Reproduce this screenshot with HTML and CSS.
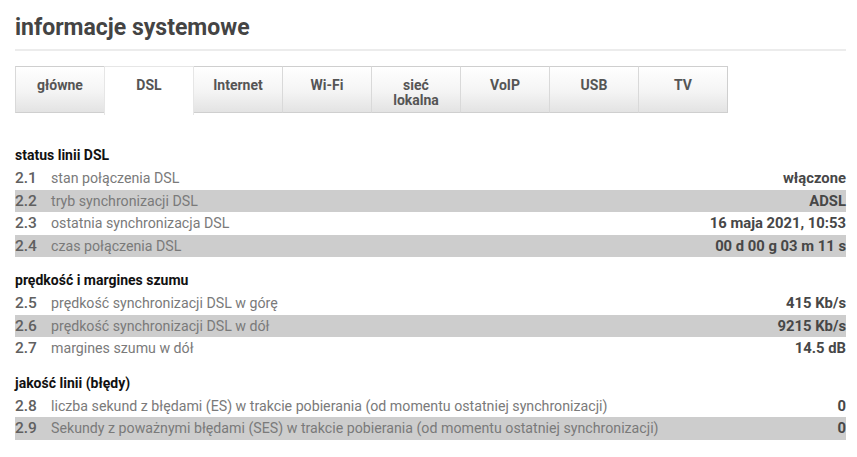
FILE: index.html
```html
<!DOCTYPE html>
<html lang="pl">
<head>
<meta charset="utf-8">
<link rel="stylesheet" href="styles.css">
</head>
<body>
<h1 class="title">informacje systemowe</h1>
<nav class="tabs">
  <div class="tab">główne</div>
  <div class="tab active">DSL</div>
  <div class="tab">Internet</div>
  <div class="tab">Wi-Fi</div>
  <div class="tab">sieć<br>lokalna</div>
  <div class="tab">VoIP</div>
  <div class="tab">USB</div>
  <div class="tab">TV</div>
</nav>

<section class="sect first">
  <h2 class="sect-title">status linii DSL</h2>
  <div class="row"><span class="num">2.1</span><span class="lbl">stan połączenia DSL</span><span class="val">włączone</span></div>
  <div class="row alt"><span class="num">2.2</span><span class="lbl">tryb synchronizacji DSL</span><span class="val">ADSL</span></div>
  <div class="row"><span class="num">2.3</span><span class="lbl">ostatnia synchronizacja DSL</span><span class="val">16 maja 2021, 10:53</span></div>
  <div class="row alt"><span class="num">2.4</span><span class="lbl">czas połączenia DSL</span><span class="val">00 d 00 g 03 m 11 s</span></div>
</section>

<section class="sect">
  <h2 class="sect-title">prędkość i margines szumu</h2>
  <div class="row"><span class="num">2.5</span><span class="lbl">prędkość synchronizacji DSL w górę</span><span class="val">415 Kb/s</span></div>
  <div class="row alt"><span class="num">2.6</span><span class="lbl">prędkość synchronizacji DSL w dół</span><span class="val">9215 Kb/s</span></div>
  <div class="row"><span class="num">2.7</span><span class="lbl">margines szumu w dół</span><span class="val">14.5 dB</span></div>
</section>

<section class="sect">
  <h2 class="sect-title">jakość linii (błędy)</h2>
  <div class="row"><span class="num">2.8</span><span class="lbl">liczba sekund z błędami (ES) w trakcie pobierania (od momentu ostatniej synchronizacji)</span><span class="val">0</span></div>
  <div class="row alt"><span class="num">2.9</span><span class="lbl">Sekundy z poważnymi błędami (SES) w trakcie pobierania (od momentu ostatniej synchronizacji)</span><span class="val">0</span></div>
</section>
</body>
</html>
```

FILE: styles.css
```css
html, body {
  margin: 0;
  padding: 0;
  background: #ffffff;
}
body {
  font-family: Roboto, "Liberation Sans", Arial, sans-serif;
  padding: 0 11px 0 15px;
  color: #444;
}
.title {
  margin: 0;
  padding-top: 15px;
  padding-bottom: 8px;
  font-size: 23px;
  line-height: 26px;
  font-weight: 700;
  color: #444;
  border-bottom: 2px solid #ececec;
}
.tabs {
  display: flex;
  margin-top: 15px;
  height: 47px;
  align-items: flex-start;
}
.tab {
  box-sizing: border-box;
  width: 90px;
  height: 47px;
  padding-top: 11px;
  text-align: center;
  font-size: 14px;
  line-height: 15px;
  font-weight: 700;
  color: #555;
  border: 1px solid #cfcfcf;
  border-left-color: #d9d9d9;
  margin-left: -1px;
  background: linear-gradient(to bottom, #ffffff 0%, #f4f4f4 55%, #e3e3e3 100%);
}
.tab:first-child {
  margin-left: 0;
}
.tab.active {
  background: #ffffff;
  border-color: #e6e6e6;
  border-bottom: none;
  height: 49px;
  position: relative;
  z-index: 1;
}
.sect {
  margin-top: 11px;
}
.sect.first {
  margin-top: 30px;
}
.sect-title {
  margin: 0;
  font-size: 14px;
  line-height: 24px;
  font-weight: 700;
  color: #111;
}
.row {
  display: flex;
  align-items: center;
  height: 22.5px;
  font-size: 14.2px;
  line-height: 16px;
}
.row.alt {
  background: #cdcdcd;
}
.num {
  width: 36px;
  flex: none;
  font-size: 15.5px;
  font-weight: 500;
  color: #606060;
}
.lbl {
  flex: 1;
  color: #7a7a7a;
  white-space: nowrap;
}
.val {
  flex: none;
  font-size: 14.8px;
  font-weight: 700;
  color: #474747;
  text-align: right;
}
```
